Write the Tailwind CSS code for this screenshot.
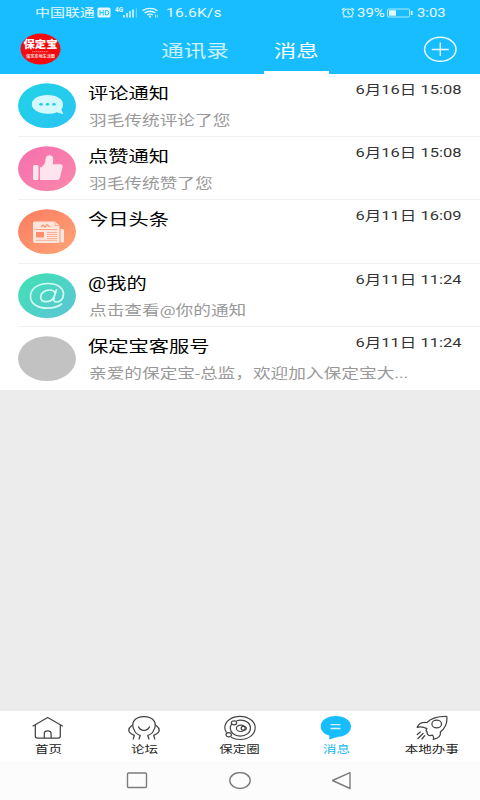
<!DOCTYPE html>
<html lang="zh-CN">
<head>
<meta charset="utf-8">
<title>消息</title>
<script src="https://cdn.jsdelivr.net/npm/@tailwindcss/browser@4"></script>
</head>
<body class="w-[480px] h-[800px] overflow-hidden bg-[#ececec] font-['Roboto','Noto_Sans_CJK_SC',sans-serif] flex flex-col whitespace-nowrap">
<header class="h-[74px] shrink-0 bg-[#18bdff] text-white flex flex-col">
  <div class="h-[25px] flex items-center pl-[35px] pr-[34px] text-[#e4f8ff]">
    <span class="w-[61px] text-[11.5px] leading-[25px] pt-[2px]"><span class="inline-block origin-left scale-x-[1.3]">中国联通</span></span>
    <svg class="w-[125px] h-[25px] -mr-[55px] shrink-0" viewBox="96 0 125 25" fill="none" stroke="#e4f8ff">
      <rect x="97.500" y="7.500" width="13" height="10" rx="1.500" fill="#e4f8ff" stroke="none"/>
      <path d="M100 10v5.500M103.200 10v5.500M100 12.700h3.200M105.300 10.500h1.500q2 0 2 2.200t-2 2.200h-1.500z" stroke="#18bdff" stroke-width="1"/>
      <text x="115" y="12" font-size="6.500" font-weight="700" textLength="8" lengthAdjust="spacingAndGlyphs" fill="#e4f8ff" stroke="none">4G</text>
      <path d="M124 15v2.500M127 13v4.500M130 11v6.500M133 9.500v8" stroke-width="1.500"/><path d="M136.300 8v9.500" stroke-width="1" opacity=".5"/>
      <path d="M142.500 10.600q7.500-4.600 15 0M144.500 12.900q5.500-3.300 11 0M147 15q3-1.700 6 0" stroke-width="1.300"/><circle cx="150" cy="16.700" r="1.100" fill="#e4f8ff" stroke="none"/><path d="M155.500 14.500v3.200M157.300 14.500v3.200" stroke-width=".7"/>
    </svg>
    <span class="text-[12px] leading-[25px] pt-[2px] tracking-[.1px]"><span class="inline-block origin-left scale-x-[1.3]">16.6K/s</span></span>
    <div class="ml-auto flex items-center">
      <svg class="w-[14px] h-[11px] mr-[2px]" viewBox="0 0 14 11" fill="none" stroke="#e4f8ff" stroke-width="1.200"><ellipse cx="7" cy="6" rx="5" ry="4"/><path d="M7 3.500V6l2 1.300M1 3l2.500-2M13 3l-2.500-2M3.500 9.500l-1 1M10.500 9.500l1 1"/></svg>
      <span class="w-[30px] text-[12px] leading-[25px] pt-[2px]"><span class="inline-block origin-left scale-x-[1.25]">39%</span></span>
      <svg class="w-[26px] h-[10px] mr-[4px]" viewBox="0 0 26 10" fill="none" stroke="#e4f8ff"><rect x=".5" y="1" width="22" height="8" rx="1" opacity=".75"/><path d="M2 2.300h7v5.400H2z" fill="#e4f8ff" stroke="none"/><path d="M24.700 3v4" stroke-width="1.700"/></svg>
      <span class="w-[29px] text-[12px] leading-[25px] pt-[2px]"><span class="inline-block origin-left scale-x-[1.24]">3:03</span></span>
    </div>
  </div>
  <div class="h-[49px] flex pl-[20px]">
    <svg class="w-[41px] h-[32px] mt-[8px]" viewBox="0 0 41 32"><ellipse cx="20.500" cy="16" rx="20" ry="15.500" fill="#f40b0f"/><text x="3.500" y="14.500" font-size="10.500" font-weight="900" textLength="34" lengthAdjust="spacingAndGlyphs" fill="#fff">保定宝</text><path d="M12 18.700h16" stroke="#fff" stroke-width=".7" stroke-dasharray="1.500 .5" opacity=".7"/><text x="6" y="25" font-size="4" font-weight="700" textLength="29" lengthAdjust="spacingAndGlyphs" fill="#ffd6d6">保定本地生活圈</text></svg>
    <div class="ml-[89px] w-[89px] flex justify-center text-[17.3px] leading-[52px] text-[#c9f0ff]"><span class="inline-block scale-x-[1.3]">通讯录</span></div>
    <div class="ml-[25px] w-[65px] flex flex-col items-center text-[17.3px]">
      <span class="inline-block h-[46px] leading-[52px] scale-x-[1.3]">消息</span>
      <div class="h-[3px] w-full bg-white"></div>
    </div>
    <svg class="w-[34px] h-[26px] ml-[94px] mt-[11px]" viewBox="0 0 34 26" fill="none" stroke="#e9faff"><ellipse cx="17.300" cy="13.300" rx="15.700" ry="12" stroke-width="1.500"/><path d="M17.300 6.500v13.500M8.800 13.500h17" stroke-width="1.400"/></svg>
  </div>
</header>

<main class="h-[316px] shrink-0 bg-white pl-[18px] grid grid-rows-5 text-black">
  <section class="flex border-b border-[#f0f0f0]">
    <svg class="w-[58px] h-[46px] mt-[9px]" viewBox="0 0 58 46"><defs><linearGradient id="g1" x1="0" y1="0" x2="1" y2="1"><stop stop-color="#1fd3e6"/><stop offset="1" stop-color="#2bc3f3"/></linearGradient></defs><ellipse cx="29" cy="22.700" rx="29" ry="22.400" fill="url(#g1)"/><path d="M29.500 12c9 0 15.500 4 15.500 9.300 0 2.200-.7 4-1.700 5.300l2 4.700-6.500-2.100c-2.600 1-5.700 1.500-9.300 1.500-9 0-15.700-4-15.700-9.400S20.500 12 29.500 12z" fill="#d3f8fd"/><g fill="#28cbea"><ellipse cx="23" cy="21.300" rx="1.800" ry="1.400"/><ellipse cx="29.500" cy="21.300" rx="1.800" ry="1.400"/><ellipse cx="36" cy="21.300" rx="1.800" ry="1.400"/></g></svg>
    <div class="ml-[12px] pt-[10px] flex-1"><h2 class="text-[15.6px] leading-[20px]"><span class="inline-block origin-left scale-x-[1.3]">评论通知</span></h2><p class="pl-[1px] mt-[6px] text-[13.6px] leading-[20px] text-[#999]"><span class="inline-block origin-left scale-x-[1.3]">羽毛传统评论了您</span></p></div>
    <time class="pt-[6px] pr-[18px] text-[12.7px] leading-[20px] text-[#333]"><span class="inline-block origin-right scale-x-[1.3]">6月16日 15:08</span></time>
  </section>
  <section class="flex border-b border-[#f0f0f0]">
    <svg class="w-[58px] h-[46px] mt-[9px]" viewBox="0 0 58 46"><defs><linearGradient id="g2" x1="0" y1="0" x2="1" y2="1"><stop stop-color="#f56fae"/><stop offset="1" stop-color="#fb88ab"/></linearGradient></defs><ellipse cx="29" cy="22.700" rx="29" ry="22.400" fill="url(#g2)"/><rect x="15" y="19" width="5.500" height="15" rx="1.500" fill="#ffe4ee"/><path d="M22 21.500c3.500-1 5.200-3.800 5.500-8 .2-3 1.800-4.200 4-4.200 3 0 4 2.200 3.700 5l-.5 4h7.500c2 0 2.800 1.100 2.400 2.600L42 31.500c-.5 1.700-1.600 2.500-3.500 2.500H22z" fill="#ffe4ee"/></svg>
    <div class="ml-[12px] pt-[10px] flex-1"><h2 class="text-[15.6px] leading-[20px]"><span class="inline-block origin-left scale-x-[1.3]">点赞通知</span></h2><p class="pl-[1px] mt-[6px] text-[13.6px] leading-[20px] text-[#999]"><span class="inline-block origin-left scale-x-[1.3]">羽毛传统赞了您</span></p></div>
    <time class="pt-[6px] pr-[18px] text-[12.7px] leading-[20px] text-[#333]"><span class="inline-block origin-right scale-x-[1.3]">6月16日 15:08</span></time>
  </section>
  <section class="flex border-b border-[#f0f0f0]">
    <svg class="w-[58px] h-[46px] mt-[9px]" viewBox="0 0 58 46"><defs><linearGradient id="g3" x1="0" y1="0" x2="1" y2="1"><stop stop-color="#fb7b60"/><stop offset="1" stop-color="#fea577"/></linearGradient></defs><ellipse cx="29" cy="22.700" rx="29" ry="22.400" fill="url(#g3)"/><path d="M16.500 12.500H37l4.500 4v17.500H18q-3 0-3-2V14q0-1.500 1.500-1.500z" fill="#ffe6dc"/><path d="M42.500 20h2q1.500 0 1.500 1.500V32q0 1.700-1.800 1.700T42.500 32z" fill="#ffe6dc"/><path d="M37 12.500v4h4.500M17 20.500h22" fill="none" stroke="#fc9474" stroke-width=".8"/><path d="M23 18l2-2 2 2 2-2.500 3 2.500" fill="none" stroke="#fc9474" stroke-width="1.200"/><path d="M18 23h8v5.500h-8z" fill="#fc8d6d"/><path d="M29 23.500h10M29 25.500h10M29 27.500h10M29 29.500h10M18 31.300h21" stroke="#fca183" stroke-width=".8"/></svg>
    <div class="ml-[12px] pt-[10px] flex-1"><h2 class="text-[15.6px] leading-[20px]"><span class="inline-block origin-left scale-x-[1.3]">今日头条</span></h2></div>
    <time class="pt-[6px] pr-[18px] text-[12.7px] leading-[20px] text-[#333]"><span class="inline-block origin-right scale-x-[1.3]">6月11日 16:09</span></time>
  </section>
  <section class="flex border-b border-[#f0f0f0]">
    <svg class="w-[58px] h-[46px] mt-[9px]" viewBox="0 0 58 46"><defs><linearGradient id="g4" x1="0" y1="0" x2="1" y2="1"><stop offset=".1" stop-color="#43dfb6"/><stop offset=".9" stop-color="#59c7d3"/></linearGradient></defs><ellipse cx="29" cy="22.700" rx="29" ry="22.400" fill="url(#g4)"/><g fill="none" stroke="#d3fbf3" stroke-width="1.700" stroke-linecap="round"><path d="M43.500 31c-3.500 2.700-8 4.200-14 4.200-10.200 0-17-4.600-17-11.700 0-7.500 7.200-13 17.500-13 9.300 0 15.500 4.300 15.500 10.500 0 5-3.300 8-7 8-2.500 0-3.300-1.600-2.600-4l2.600-8.500"/><path d="M37 20c-.7-2-2.700-3-5.300-3-5 0-9 3-9 7 0 3 2.200 4.700 5.500 4.700 4 0 7-2.200 8-5.700"/></g></svg>
    <div class="ml-[12px] pt-[10px] flex-1"><h2 class="text-[15.6px] leading-[20px]"><span class="inline-block origin-left scale-x-[1.3]">@我的</span></h2><p class="pl-[1px] mt-[6px] text-[13.6px] leading-[20px] text-[#999]"><span class="inline-block origin-left scale-x-[1.3]">点击查看@你的通知</span></p></div>
    <time class="pt-[6px] pr-[18px] text-[12.7px] leading-[20px] text-[#333]"><span class="inline-block origin-right scale-x-[1.3]">6月11日 11:24</span></time>
  </section>
  <section class="flex">
    <svg class="w-[58px] h-[46px] mt-[9px]" viewBox="0 0 58 46"><ellipse cx="29" cy="22.700" rx="29" ry="22.400" fill="#c2c2c2"/></svg>
    <div class="ml-[12px] pt-[10px] flex-1"><h2 class="text-[15.6px] leading-[20px]"><span class="inline-block origin-left scale-x-[1.3]">保定宝客服号</span></h2><p class="pl-[1px] mt-[6px] text-[13.6px] leading-[20px] text-[#999]"><span class="inline-block origin-left scale-x-[1.3]">亲爱的保定宝-总监，欢迎加入保定宝大...</span></p></div>
    <time class="pt-[6px] pr-[18px] text-[12.7px] leading-[20px] text-[#333]"><span class="inline-block origin-right scale-x-[1.3]">6月11日 11:24</span></time>
  </section>
</main>

<div class="flex-1"></div>

<nav class="h-[50px] shrink-0 bg-white grid grid-cols-5 text-[10.4px] leading-[18px] text-[#222]">
  <div class="flex flex-col items-center pt-[4px]">
    <svg class="w-[32px] h-[26px]" viewBox="0 0 32 26" fill="none" stroke="#444" stroke-width="1.250" stroke-linejoin="round" stroke-linecap="round"><path d="M1 11L15.700 2.500l14.800 8.500M3.300 10v11q0 2 2 2h21q2 0 2-2v-11M12.300 23V18.500q0-2.700 3.400-2.700t3.400 2.700v4.500"/></svg>
    <span class="scale-x-[1.3]">首页</span>
  </div>
  <div class="flex flex-col items-center pt-[4px]">
    <svg class="w-[32px] h-[26px]" viewBox="0 0 32 26" fill="none" stroke="#444" stroke-width="1.250" stroke-linejoin="round" stroke-linecap="round"><path d="M6.500 15.500C2 8.500 6.500 1.500 16 1.500S30 8.500 25.500 15.500M10.500 11.800q1.500 3.500 5.500 3.500t5.500-3.500"/><path d="M3.800 10.500Q.5 13 .8 15.700 1.300 18.500 6.300 20.300L5.300 24M6.500 15.500Q7 18.500 12.300 20.500L11 24M28.200 10.500Q31.500 13 31.200 15.700 30.700 18.500 25.700 20.300L26.700 24M25.500 15.500Q25 18.500 19.700 20.500L21 24"/></svg>
    <span class="scale-x-[1.3]">论坛</span>
  </div>
  <div class="flex flex-col items-center pt-[4px]">
    <svg class="w-[32px] h-[26px]" viewBox="0 0 32 26" fill="none" stroke="#444" stroke-width="1.200"><path d="M2.500 17.500Q.8 15.500.8 12.500C1 6 8 1.300 16 1.300S31.200 6.200 31.200 12.800 24.500 24.500 16 24.500q-5 0-9-2.300"/><path d="M12.500 5.700q2-.6 4-.6c5.500 0 10 3.300 10 8s-4.700 8-10.300 8S6.300 17.500 6.300 13.200q0-2.500 1.500-4.300"/><ellipse cx="10" cy="7.800" rx="2.700" ry="2"/><ellipse cx="4.700" cy="19.800" rx="2.700" ry="2.100"/><ellipse cx="16.800" cy="13.300" rx="4.400" ry="3.200"/><ellipse cx="19.700" cy="13.300" rx="2.600" ry="1.900"/></svg>
    <span class="scale-x-[1.3]">保定圈</span>
  </div>
  <div class="flex flex-col items-center pt-[4px] text-[#20b7ee]">
    <svg class="w-[32px] h-[26px]" viewBox="0 0 32 26"><path d="M15.700 1C24.500 1 31 5.500 31 11.500c0 5.500-5 9.800-12.500 10.300L9 24.500l.5-3.800C4 19 .7 15.700.7 11.500.7 5.500 7 1 15.700 1z" fill="#18bdff"/><path d="M10.500 9.700h10M10.500 13.500h10" stroke="#d5f4ff" stroke-width="1.300"/></svg>
    <span class="scale-x-[1.3]">消息</span>
  </div>
  <div class="flex flex-col items-center pt-[4px]">
    <svg class="w-[32px] h-[26px]" viewBox="0 0 32 26" fill="none" stroke="#444" stroke-width="1.250" stroke-linejoin="round" stroke-linecap="round"><path d="M11 7.500C15 3.500 20 1.300 30.800 1.500c.7 6.700-1.500 11.700-6.500 15.500.8 3.500-1.500 6.300-7 7.300.6-1.700.3-3-.8-4.200-2 .7-3.400.6-4.500-.3-.8-.7-1.200-1.500-.7-2.700-1.600-.8-1.600-2-.4-3.500-2.500-1.300-6-2-9.700-1.300C2.500 9 6 7 11 7.500z"/><ellipse cx="20.700" cy="9" rx="4.800" ry="3.800"/><path d="M4.300 17l-3 2.500M7 18.500l-5 5M8.700 20.700L6 24"/></svg>
    <span class="scale-x-[1.3]">本地办事</span>
  </div>
</nav>
<footer class="h-[39px] shrink-0 bg-[#fcfcfc] flex items-center justify-center gap-[81px]">
  <svg class="w-[22px] h-[18px]" viewBox="0 0 22 18"><rect x="1.500" y="1" width="19" height="14.500" rx="1" fill="none" stroke="#7c7c7c" stroke-width="1.400"/></svg>
  <svg class="w-[22px] h-[18px]" viewBox="0 0 22 18"><ellipse cx="11" cy="8.500" rx="10.200" ry="8" fill="none" stroke="#7c7c7c" stroke-width="1.400"/></svg>
  <svg class="w-[22px] h-[18px]" viewBox="0 0 22 18"><path d="M18 .700L.500 8.500l17.500 8z" fill="none" stroke="#7c7c7c" stroke-width="1.400" stroke-linejoin="round"/></svg>
</footer>
</body>
</html>
